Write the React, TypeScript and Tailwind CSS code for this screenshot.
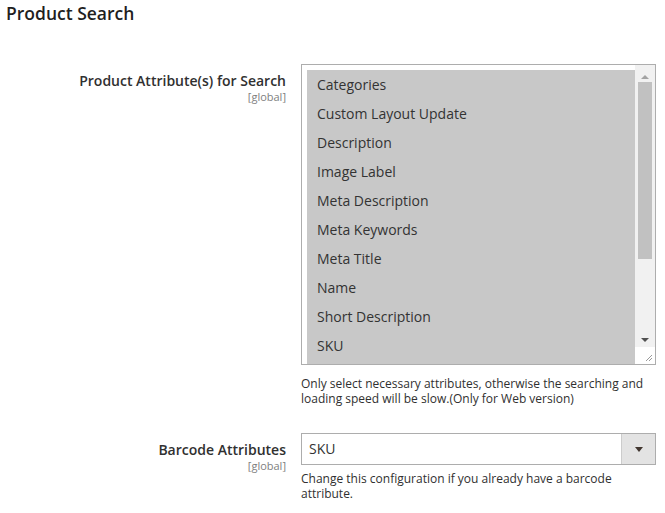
import React from "react";

const attributes = [
  "Categories",
  "Custom Layout Update",
  "Description",
  "Image Label",
  "Meta Description",
  "Meta Keywords",
  "Meta Title",
  "Name",
  "Short Description",
  "SKU",
];

function FieldLabel({ text, top }: { text: string; top: string }) {
  return (
    <div className={`w-[286px] shrink-0 text-right ${top}`}>
      <div className="text-[14px] leading-[18px] font-semibold text-[#303030]">{text}</div>
      <div className="text-[11px] leading-[13px] text-[#808080]">[global]</div>
    </div>
  );
}

function MultiSelect() {
  return (
    <div className="w-[355px] h-[301px] border border-[#adadad] bg-white flex pl-[5px] pt-[5px]">
      <div className="flex-1 bg-[#c8c8c8] overflow-hidden">
        {attributes.map((a) => (
          <div key={a} className="h-[29px] leading-[29px] pl-[10px] text-[14px] text-[#333333]">
            {a}
          </div>
        ))}
      </div>
      {/* fake scrollbar */}
      <div className="w-[20px] flex flex-col bg-[#f1f1f1] -mt-[5px]">
        <div className="h-[17px] flex items-end justify-center pb-[3px]">
          <div className="w-0 h-0 border-l-[4px] border-r-[4px] border-b-[4px] border-l-transparent border-r-transparent border-b-[#a3a3a3]" />
        </div>
        <div className="h-[177px] mx-[3px] bg-[#c1c1c1]" />
        <div className="flex-1" />
        <div className="h-[14px] flex items-center justify-center">
          <div className="w-0 h-0 border-l-[4px] border-r-[4px] border-t-[4px] border-l-transparent border-r-transparent border-t-[#505050]" />
        </div>
        <div className="h-[17px] bg-white flex items-end justify-end pr-[2px] pb-[2px]">
          <svg width="9" height="9" viewBox="0 0 9 9">
            <path d="M8 2 L2 8 M8 5 L5 8" stroke="#9a9a9a" strokeWidth="1" />
          </svg>
        </div>
      </div>
    </div>
  );
}

function SingleSelect() {
  return (
    <div className="w-[355px] h-[32px] border border-[#adadad] bg-white flex">
      <div className="flex-1 pl-[7px] leading-[30px] text-[14px] text-[#333333]">SKU</div>
      <div className="w-[34px] bg-[#e3e3e3] border-l border-[#cccccc] flex items-center justify-center">
        <div className="w-0 h-0 border-l-[4px] border-r-[4px] border-t-[5px] border-l-transparent border-r-transparent border-t-[#41362f]" />
      </div>
    </div>
  );
}

export default function App() {
  return (
    <div
      className="w-[665px] h-[513px] bg-white overflow-hidden"
      style={{ fontFamily: '"Open Sans", "Liberation Sans", sans-serif' }}
    >
      <div className="pl-[6px] pt-[1px] text-[17.5px] leading-[24px] font-semibold text-[#1f1f1f]">
        Product Search
      </div>

      <div className="flex gap-[15px] mt-[39px]">
        <FieldLabel text="Product Attribute(s) for Search" top="pt-[8px]" />
        <div>
          <MultiSelect />
          <p className="mt-[11px] w-[355px] text-[12px] leading-[15px] text-[#303030]">
            Only select necessary attributes, otherwise the searching and loading speed will be slow.(Only for Web version)
          </p>
        </div>
      </div>

      <div className="flex gap-[15px] mt-[27px]">
        <FieldLabel text="Barcode Attributes" top="pt-[8px]" />
        <div>
          <SingleSelect />
          <p className="mt-[6px] w-[355px] text-[12px] leading-[15px] text-[#303030]">
            Change this configuration if you already have a barcode attribute.
          </p>
        </div>
      </div>
    </div>
  );
}
